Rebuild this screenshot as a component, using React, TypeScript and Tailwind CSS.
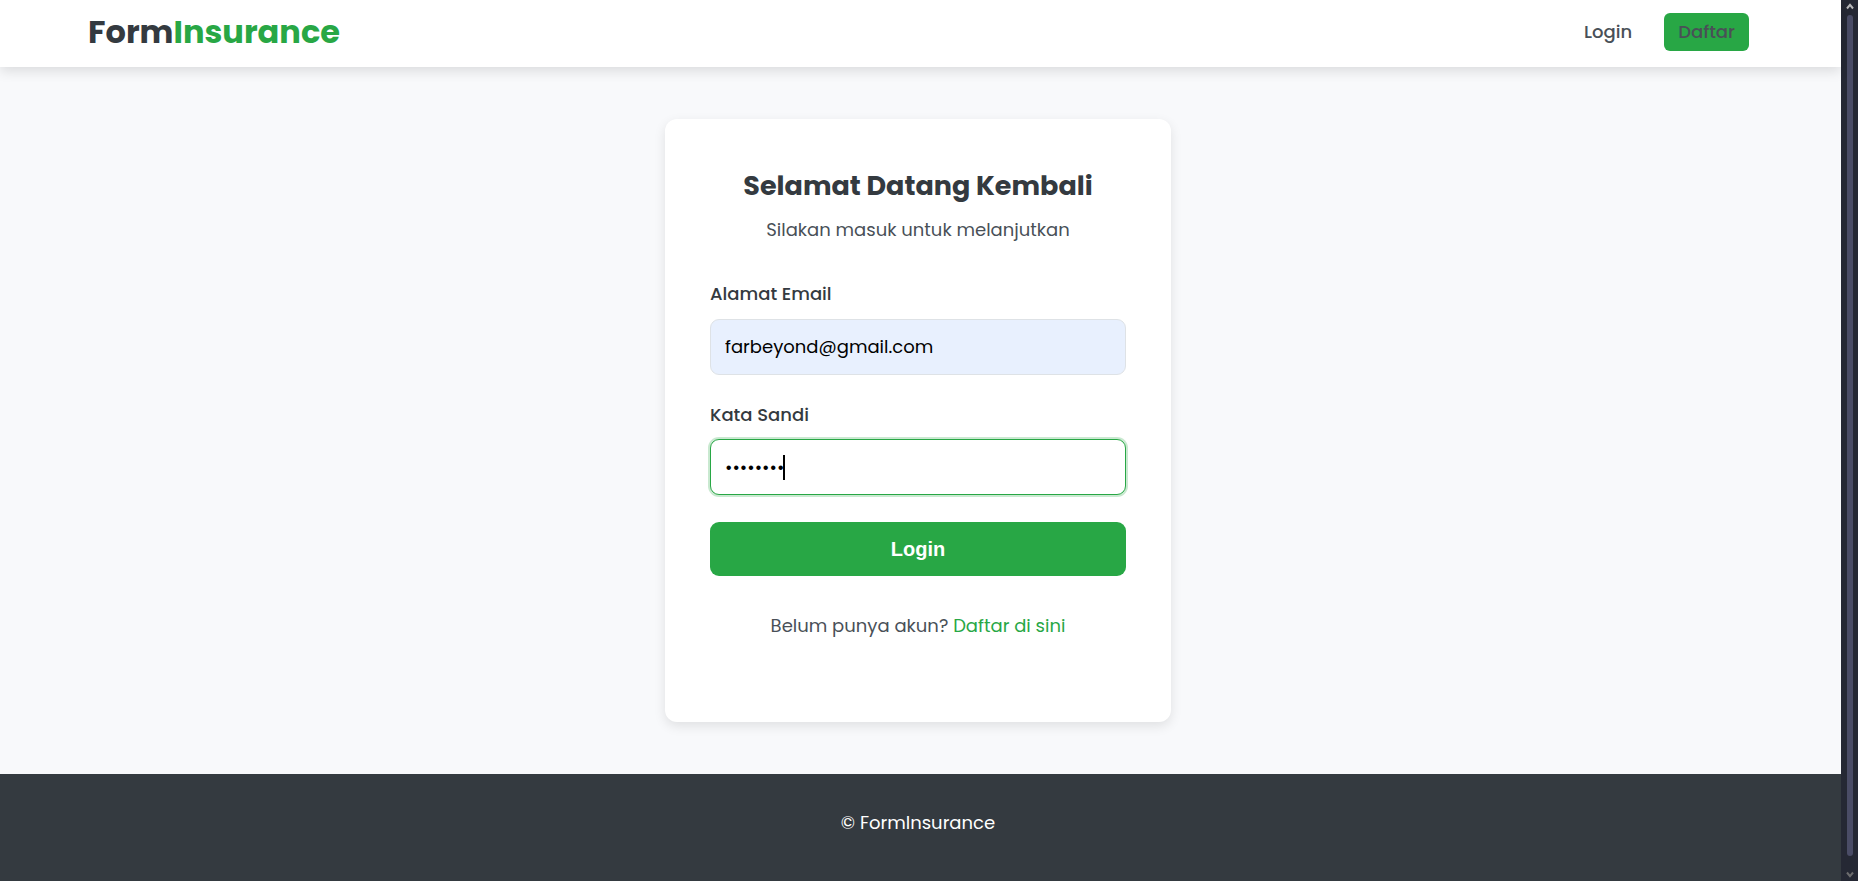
import React from "react";

function Header() {
  return (
    <header className="relative flex h-[67px] items-center justify-between bg-white pr-[92px] pl-[88px] pb-[3px] shadow-[0_4px_12px_rgba(0,0,0,0.12)]">
      <a href="#" className="text-[32px] leading-10 font-bold text-[#343a40]">
        Form<span className="text-[#28a745]">Insurance</span>
      </a>
      <nav className="flex items-center gap-8 text-[18px] font-medium text-[#495057]">
        <a href="#login" className="flex h-[38px] items-center pb-0.5">
          Login
        </a>
        <a
          href="#daftar"
          className="flex h-[38px] items-center rounded-[6px] bg-[#28a745] px-[14px] pb-0.5"
        >
          Daftar
        </a>
      </nav>
    </header>
  );
}

function LoginCard() {
  return (
    <section className="w-full max-w-[506px] rounded-[12px] bg-white px-[45px] pt-[45px] pb-[82px] shadow-[0_4px_12px_rgba(0,0,0,0.1)]">
      <h1 className="text-center text-[27px] leading-[44px] font-bold text-[#343a40]">
        Selamat Datang Kembali
      </h1>
      <p className="mt-2 text-center text-[18px] leading-7 text-[#495057]">
        Silakan masuk untuk melanjutkan
      </p>
      <form className="mt-9 flex flex-col" onSubmit={(e) => e.preventDefault()}>
        <label htmlFor="email" className="text-[18px] leading-7 font-medium text-[#343a40]">
          Alamat Email
        </label>
        <input
          id="email"
          type="email"
          defaultValue="farbeyond@gmail.com"
          className="mt-[11px] h-14 w-full rounded-[9px] border border-[#dee2e6] bg-[#e8f0fe] px-[14px] pb-0.5 text-[18px] text-black outline-none"
        />
        <label htmlFor="sandi" className="mt-[26px] text-[18px] leading-7 font-medium text-[#343a40]">
          Kata Sandi
        </label>
        <div className="relative mt-[10px]">
          <input
            id="sandi"
            type="password"
            defaultValue="password"
            className="block h-14 w-full rounded-[9px] border border-[#28a745] bg-white px-[14px] text-[18px] text-black caret-transparent shadow-[0_0_0_2px_rgba(40,167,69,0.25)] outline-none"
          />
          <span className="absolute top-4 left-[73px] h-[25px] w-[2px] bg-black" />
        </div>
        <button
          type="submit"
          className="mt-[27px] h-[54px] rounded-[9px] bg-[#28a745] font-['Liberation_Sans',Arial,sans-serif] text-[20px] font-bold text-white"
        >
          Login
        </button>
      </form>
      <p className="mt-9 text-center text-[18px] leading-7 text-[#495057]">
        Belum punya akun?{" "}
        <a href="#daftar" className="text-[#28a745]">
          Daftar di sini
        </a>
      </p>
    </section>
  );
}

function Scrollbar() {
  return (
    <div aria-hidden="true" className="flex w-[17px] shrink-0 flex-col items-center bg-[#252834] py-[3px] pl-px">
      <svg width="8" height="7" viewBox="0 0 8 7" fill="none" stroke="#b9b9bb" strokeWidth="2">
        <path d="M1 5.5 4 1.8l3 3.7" />
      </svg>
      <div className="mt-[5px] mb-[15px] w-[6px] flex-1 rounded-full bg-[#4a4c66]" />
      <svg width="8" height="7" viewBox="0 0 8 7" fill="none" stroke="#6c6c6e" strokeWidth="2">
        <path d="M1 1.5 4 5.2l3-3.7" />
      </svg>
    </div>
  );
}

export default function App() {
  return (
    <div className="flex min-h-screen font-['Poppins',Inter,sans-serif]">
      <div className="flex min-w-0 flex-1 flex-col bg-[#f8f9fb]">
        <Header />
        <main className="flex flex-1 items-center justify-center py-[52px] pr-[5px]">
          <LoginCard />
        </main>
        <footer className="bg-[#343a40] pt-[35px] pr-[5px] pb-11 text-center text-[18px] leading-7 text-white">
          © FormInsurance
        </footer>
      </div>
      <Scrollbar />
    </div>
  );
}
